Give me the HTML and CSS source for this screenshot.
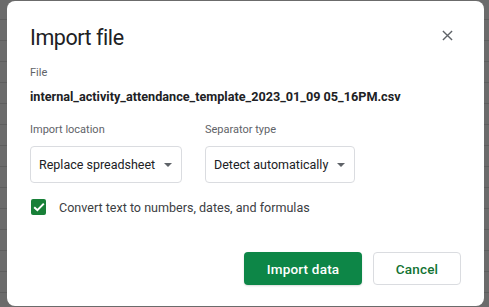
FILE: index.html
```html
<!DOCTYPE html>
<html lang="en">
<head>
  <meta charset="UTF-8" />
  <meta name="viewport" content="width=device-width, initial-scale=1.0"/>
  <title>Import file</title>
  <link rel="stylesheet" href="styles.css">
</head>
<body>
  <div class="dialog">
    <div class="dialog-head">
      <h1>Import file</h1>
      <button class="close-btn" aria-label="Close">
        <svg width="11" height="11" viewBox="0 0 12 12">
          <path d="M1 1 L11 11 M11 1 L1 11" stroke="#5f6368" stroke-width="1.5" fill="none"/>
        </svg>
      </button>
    </div>

    <div class="label">File</div>
    <div class="filename">internal_activity_attendance_template_2023_01_09 05_16PM.csv</div>

    <div class="fields">
      <div class="field">
        <div class="label">Import location</div>
        <div class="select select-wide">
          <span>Replace spreadsheet</span>
          <span class="caret"></span>
        </div>
      </div>
      <div class="field">
        <div class="label">Separator type</div>
        <div class="select">
          <span>Detect automatically</span>
          <span class="caret"></span>
        </div>
      </div>
    </div>

    <label class="check-row">
      <span class="checkbox">
        <svg width="12" height="10" viewBox="0 0 12 10">
          <path d="M1.2 5.2 L4.4 8.2 L10.8 1.6" stroke="#fff" stroke-width="2" fill="none"/>
        </svg>
      </span>
      Convert text to numbers, dates, and formulas
    </label>

    <div class="actions">
      <button class="primary-btn">Import data</button>
      <button class="cancel-btn">Cancel</button>
    </div>
  </div>
</body>
</html>
```

FILE: styles.css
```css
html, body {
  margin: 0;
  height: 100%;
}
body {
  font-family: Roboto, "Liberation Sans", sans-serif;
  background-color: #6b6b6b;
  background-image: linear-gradient(#5e5e5e 1px, transparent 1px);
  background-size: 100% 21px;
  background-position: 0 19px;
  padding: 1px 5px 0 7px;
  box-sizing: border-box;
  overflow: hidden;
}
.dialog {
  background: #fff;
  border-radius: 8px;
  height: 305px;
  width: 477px;
  box-sizing: border-box;
  padding: 0 23px 0 23px;
}
.dialog-head {
  display: flex;
  justify-content: space-between;
  align-items: center;
  padding-top: 22px;
  height: 28px;
}
h1 {
  margin: 0;
  font-size: 21.5px;
  font-weight: 400;
  letter-spacing: -0.45px;
  color: #202124;
}
.close-btn {
  border: none;
  background: none;
  padding: 0;
  width: 16px;
  height: 16px;
  display: flex;
  align-items: center;
  justify-content: center;
  margin-right: 6px;
  margin-bottom: 4px;
}
.label {
  font-size: 11px;
  color: #5f6368;
  margin-top: 15px;
  line-height: 14px;
}
.filename {
  font-size: 12.65px;
  font-weight: 700;
  color: #202124;
  margin-top: 9px;
  line-height: 16px;
  white-space: nowrap;
}
.fields {
  display: flex;
  gap: 23px;
  margin-top: 3px;
}
.select {
  margin-top: 9px;
  height: 37px;
  width: 150px;
  border: 1px solid #dadce0;
  border-radius: 4px;
  box-sizing: border-box;
  display: flex;
  align-items: center;
  padding: 0 8px;
  gap: 9px;
  font-size: 12.5px;
  color: #202124;
  white-space: nowrap;
}
.select-wide {
  width: 152px;
}
.caret {
  flex: none;
  width: 0;
  height: 0;
  border-left: 4px solid transparent;
  border-right: 4px solid transparent;
  border-top: 4px solid #5f6368;
  margin-top: 1px;
}
.check-row {
  display: flex;
  align-items: center;
  margin-top: 16px;
  font-size: 12.55px;
  color: #3c4043;
  gap: 13px;
  margin-left: 1px;
}
.checkbox {
  width: 15px;
  height: 16px;
  background: #188038;
  border-radius: 2px;
  display: flex;
  align-items: center;
  justify-content: center;
}
.actions {
  display: flex;
  justify-content: flex-end;
  gap: 11px;
  margin-top: 37px;
}
.primary-btn, .cancel-btn {
  font-family: Roboto, "Liberation Sans", sans-serif;
  font-size: 13.5px;
  font-weight: 500;
  letter-spacing: 0.2px;
  height: 33px;
  border-radius: 4px;
  cursor: pointer;
}
.primary-btn {
  width: 118px;
  background: #0d8647;
  color: #fff;
  border: none;
  box-shadow: 0 1px 2px rgba(0,0,0,0.15);
}
.cancel-btn {
  width: 88px;
  background: #fff;
  color: #137333;
  border: 1px solid #dadce0;
}
```
